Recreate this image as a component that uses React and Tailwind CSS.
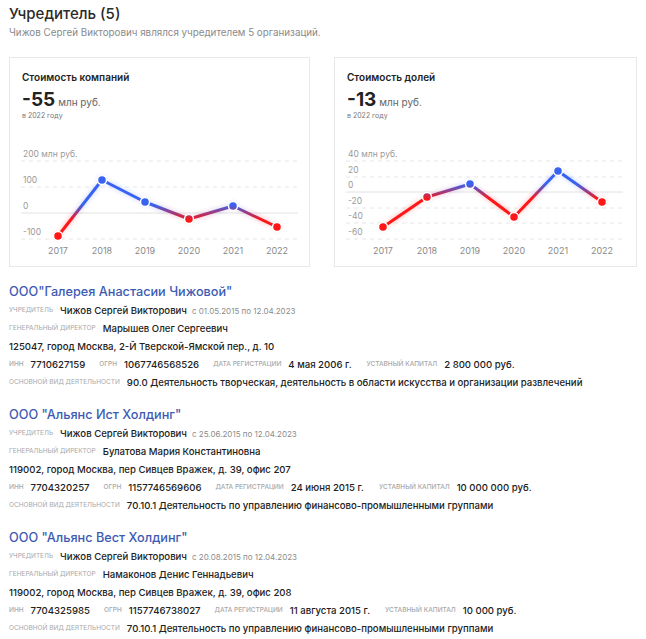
import React from 'react';

const years = ['2017', '2018', '2019', '2020', '2021', '2022'];
const xs = [48, 92, 135, 179, 223, 267];

const charts = [
  {
    id: 'companies',
    title: 'Стоимость компаний',
    value: '-55',
    grid: [
      { y: 16, label: '200 млн руб.' },
      { y: 42, label: '100' },
      { y: 68, label: '0', zero: true },
      { y: 94, label: '-100' },
    ],
    zeroY: 68,
    points: [91, 35, 57, 74, 61, 82],
  },
  {
    id: 'shares',
    title: 'Стоимость долей',
    value: '-13',
    grid: [
      { y: 16, label: '40 млн руб.' },
      { y: 32, label: '20' },
      { y: 47, label: '0', zero: true },
      { y: 63, label: '-20' },
      { y: 78, label: '-40' },
      { y: 94, label: '-60' },
    ],
    zeroY: 47,
    points: [82, 52, 39, 72, 26, 57],
  },
];

const companies = [
  {
    name: 'ООО"Галерея Анастасии Чижовой"',
    period: 'с 01.05.2015 по 12.04.2023',
    director: 'Марышев Олег Сергеевич',
    address: '125047, город Москва, 2-Й Тверской-Ямской пер., д. 10',
    inn: '7710627159',
    ogrn: '1067746568526',
    date: '4 мая 2006 г.',
    capital: '2 800 000 руб.',
    activity: '90.0 Деятельность творческая, деятельность в области искусства и организации развлечений',
  },
  {
    name: 'ООО "Альянс Ист Холдинг"',
    period: 'с 25.06.2015 по 12.04.2023',
    director: 'Булатова Мария Константиновна',
    address: '119002, город Москва, пер Сивцев Вражек, д. 39, офис 207',
    inn: '7704320257',
    ogrn: '1157746569606',
    date: '24 июня 2015 г.',
    capital: '10 000 000 руб.',
    activity: '70.10.1 Деятельность по управлению финансово-промышленными группами',
  },
  {
    name: 'ООО "Альянс Вест Холдинг"',
    period: 'с 20.08.2015 по 12.04.2023',
    director: 'Намаконов Денис Геннадьевич',
    address: '119002, город Москва, пер Сивцев Вражек, д. 39, офис 208',
    inn: '7704325985',
    ogrn: '1157746738027',
    date: '11 августа 2015 г.',
    capital: '10 000 руб.',
    activity: '70.10.1 Деятельность по управлению финансово-промышленными группами',
  },
];

const Chart = ({ chart }) => {
  const d = chart.points.map((y, i) => `${i ? 'L' : 'M'}${xs[i]} ${y}`).join(' ');
  return (
    <svg width="300" height="120" className="block">
      <defs>
        <linearGradient
          id={`g-${chart.id}`}
          gradientUnits="userSpaceOnUse"
          x1="0"
          y1={chart.zeroY - 8}
          x2="0"
          y2={chart.zeroY + 7}
        >
          <stop offset="0" stopColor="#3763f2" />
          <stop offset="1" stopColor="#ff1414" />
        </linearGradient>
        <filter id={`f-${chart.id}`} x="-20%" y="-30%" width="140%" height="160%">
          <feGaussianBlur in="SourceGraphic" stdDeviation="2.5" result="b" />
          <feComponentTransfer in="b" result="s">
            <feFuncA type="linear" slope="0.35" />
          </feComponentTransfer>
          <feMerge>
            <feMergeNode in="s" />
            <feMergeNode in="SourceGraphic" />
          </feMerge>
        </filter>
      </defs>
      {chart.grid.map((g) => (
        <g key={g.label}>
          <line
            x1="11"
            x2="288"
            y1={g.y}
            y2={g.y}
            stroke={g.zero ? '#e2e2e2' : '#e6e6e6'}
            strokeDasharray={g.zero ? undefined : '4 4'}
          />
          <text x="13" y={g.y - 4} fontSize="8.5" fill="#9a9a9a">
            {g.label}
          </text>
        </g>
      ))}
      <g filter={`url(#f-${chart.id})`}>
        <path d={d} fill="none" stroke={`url(#g-${chart.id})`} strokeWidth="3" strokeLinejoin="round" />
        {chart.points.map((y, i) => (
          <circle key={i} cx={xs[i]} cy={y} r="4.5" fill={`url(#g-${chart.id})`} stroke="#fff" strokeWidth="1.5" />
        ))}
      </g>
      {years.map((yr, i) => (
        <text key={yr} x={xs[i]} y="109" fontSize="9" fill="#8a8a8a" textAnchor="middle">
          {yr}
        </text>
      ))}
    </svg>
  );
};

const Label = ({ children }) => (
  <span className="text-[6.5px] uppercase text-[#a8a8a8] mr-[7px]">{children}</span>
);

const Company = ({ c }) => (
  <div className="flex flex-col">
    <div className="h-[20px] flex items-center text-[12.7px] text-[#3d5bb3] font-medium">{c.name}</div>
    <div className="h-[18px] flex items-center">
      <Label>Учредитель</Label>
      <span className="text-[9.6px] font-medium text-[#222] mr-[5px]">Чижов Сергей Викторович</span>
      <span className="text-[8px] text-[#8c8c8c]">{c.period}</span>
    </div>
    <div className="h-[18px] flex items-center">
      <Label>Генеральный директор</Label>
      <span className="text-[9.6px] font-medium text-[#222]">{c.director}</span>
    </div>
    <div className="h-[18px] flex items-center text-[9.6px] font-medium text-[#222]">{c.address}</div>
    <div className="h-[18px] flex items-center text-[9.6px] font-medium text-[#222]">
      <Label>ИНН</Label>
      <span className="mr-[14px]">{c.inn}</span>
      <Label>ОГРН</Label>
      <span className="mr-[14px]">{c.ogrn}</span>
      <Label>Дата регистрации</Label>
      <span className="mr-[15px]">{c.date}</span>
      <Label>Уставный капитал</Label>
      <span>{c.capital}</span>
    </div>
    <div className="h-[18px] flex items-center whitespace-nowrap">
      <Label>Основной вид деятельности</Label>
      <span className="text-[9.6px] font-medium text-[#222]">{c.activity}</span>
    </div>
  </div>
);

export default function App() {
  return (
    <div className="w-[646px] px-[9px] bg-white text-[#222]" style={{ fontFamily: 'Inter, "Noto Sans", sans-serif' }}>
      <h2 className="h-[26px] pt-[1px] leading-[26px] text-[15px] font-medium text-[#2a2a2a]">Учредитель (5)</h2>
      <p className="h-[14px] leading-[14px] text-[9.8px] text-[#8a8a8a]">
        Чижов Сергей Викторович являлся учредителем 5 организаций.
      </p>
      <div className="mt-[17px] grid grid-cols-[301px_303px] gap-[24px]">
        {charts.map((chart) => (
          <div key={chart.id} className="h-[210px] border border-[#e8e8e8] flex flex-col">
            <div className="pl-[12px] pt-[11px]">
              <div className="h-[16px] leading-[16px] text-[10px] font-semibold text-[#222]">{chart.title}</div>
              <div className="mt-[4px] h-[22px] flex items-baseline">
                <span className="text-[19px] font-bold leading-[22px] text-[#222]">{chart.value}</span>
                <span className="ml-[3px] text-[10px] text-[#666]">млн руб.</span>
              </div>
              <div className="h-[10px] leading-[10px] text-[7px] text-[#777]">в 2022 году</div>
            </div>
            <div className="mt-[24px]">
              <Chart chart={chart} />
            </div>
          </div>
        ))}
      </div>
      <div className="mt-[15px] flex flex-col gap-[13px]">
        {companies.map((c) => (
          <Company key={c.name} c={c} />
        ))}
      </div>
    </div>
  );
}
